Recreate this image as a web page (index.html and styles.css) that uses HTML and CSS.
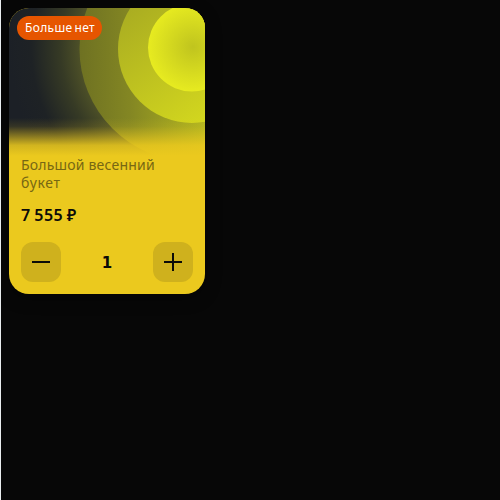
FILE: index.html
```html
<!DOCTYPE html>
<html lang="ru">
<head>
<meta charset="utf-8">
<title>Большой весенний букет</title>
<link rel="stylesheet" href="styles.css">
</head>
<body>
<article class="card">
  <div class="cover">
    <svg class="art" width="196" height="152" viewBox="0 0 196 152">
      <defs>
        <radialGradient id="glow" gradientUnits="userSpaceOnUse" cx="184" cy="39" r="184">
          <stop offset="0" stop-color="#b8bb20"/>
          <stop offset="0.28" stop-color="#969922"/>
          <stop offset="0.5" stop-color="#66682a"/>
          <stop offset="0.72" stop-color="#363a25"/>
          <stop offset="0.88" stop-color="#1e2225"/>
          <stop offset="1" stop-color="#1c2026"/>
        </radialGradient>
        <radialGradient id="sun" gradientUnits="userSpaceOnUse" cx="184" cy="39" r="46">
          <stop offset="0" stop-color="#c0c41e"/>
          <stop offset="1" stop-color="#e8ec20"/>
        </radialGradient>
        <linearGradient id="ring" x1="0" y1="0" x2="0.7" y2="1">
          <stop offset="0" stop-color="#a0a322"/>
          <stop offset="1" stop-color="#d6da1e"/>
        </linearGradient>
        <linearGradient id="halo" gradientUnits="userSpaceOnUse" x1="70" y1="0" x2="196" y2="0">
          <stop offset="0" stop-color="#6e7122"/>
          <stop offset="0.4" stop-color="#838623"/>
          <stop offset="1" stop-color="#b1b520"/>
        </linearGradient>
      </defs>
      <rect width="196" height="152" fill="url(#glow)"/>
      <circle cx="183" cy="41" r="112.5" fill="url(#halo)"/>
      <circle cx="183" cy="41" r="74" fill="url(#ring)"/>
      <circle cx="183" cy="39.5" r="44" fill="url(#sun)"/>
    </svg>
    <span class="badge">Больше нет</span>
  </div>
  <div class="info">
    <h2 class="name">Большой весенний букет</h2>
    <p class="price">7 555 ₽</p>
    <div class="counter">
      <button class="step" aria-label="Меньше"><svg width="40" height="40"><path d="M11 20h18"/></svg></button>
      <span class="count">1</span>
      <button class="step" aria-label="Больше"><svg width="40" height="40"><path d="M11 20h18M20 11v18"/></svg></button>
    </div>
  </div>
</article>
</body>
</html>
```
FILE: styles.css
```css
* { box-sizing: border-box; margin: 0; }
body {
  min-height: 500px;
  padding: 8px;
  border-left: 1px solid #e9edef;
  background: #070707;
  font-family: "Noto Sans", sans-serif;
  color: #0b0b08;
  overflow: hidden;
}
.card {
  width: 196px;
  height: 286px;
  border-radius: 20px;
  background: #ebc91e;
  overflow: hidden;
  box-shadow: 0 4px 16px rgba(0, 0, 0, .4);
}
.cover { position: relative; height: 144px; }
.art { display: block; }
.cover::after {
  content: "";
  position: absolute;
  left: 0;
  right: 0;
  top: 110px;
  height: 42px;
  background: linear-gradient(rgba(235, 201, 30, 0), rgba(235, 201, 30, .12) 20%, rgba(235, 201, 30, .88) 65%, #ebc91e 90%);
}
.badge {
  position: absolute;
  left: 8px;
  top: 8px;
  width: 85px;
  height: 24px;
  padding: 0 8px;
  border-radius: 12px;
  background: #e65500;
  color: #fff;
  font-size: 12px;
  line-height: 24px;
  letter-spacing: .35px;
  word-spacing: -1.5px;
  white-space: nowrap;
}
.info { position: relative; z-index: 1; padding: 4px 12px 12px; }
.name {
  width: 150px;
  height: 36px;
  font-size: 14px;
  font-weight: 400;
  line-height: 18px;
  letter-spacing: .7px;
  color: #776713;
}
.name::first-line { letter-spacing: .2px; }
.price { margin-top: 11px; font-size: 16px; font-weight: 600; line-height: 24px; letter-spacing: .45px; word-spacing: -.9px; }
.counter { display: flex; justify-content: space-between; align-items: center; margin-top: 15px; }
.step { width: 40px; height: 40px; padding: 0; border: 0; border-radius: 12px; background: #cfb11d; }
.step svg { display: block; fill: none; stroke: #0b0b08; stroke-width: 2; }
.count { padding-top: 2px; font: 700 15px "DejaVu Sans", sans-serif; }
```
